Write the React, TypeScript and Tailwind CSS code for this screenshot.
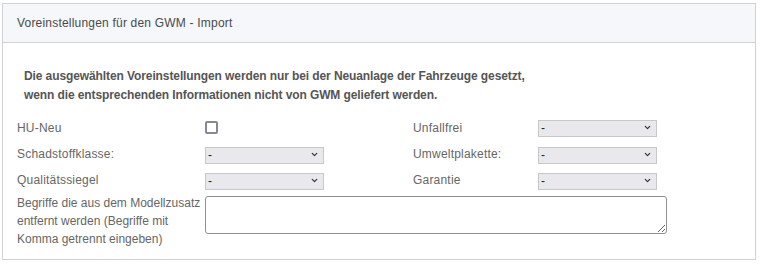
import { ChevronDown } from "lucide-react";

type Option = { label: string };

const options: Option[] = [{ label: "-" }];

function Select({ name }: { name: string }) {
  return (
    <div className="relative h-[17px] w-[119px]">
      <select
        name={name}
        defaultValue="-"
        className="h-full w-full appearance-none rounded-none border border-[#c8c8c8] bg-[#e9e9ed] pl-[2px] text-[12px] leading-[15px] text-[#222] outline-none"
      >
        {options.map((o) => (
          <option key={o.label}>{o.label}</option>
        ))}
      </select>
      <ChevronDown
        className="pointer-events-none absolute right-[5px] top-[4px] h-[9px] w-[9px] text-[#333]"
        strokeWidth={3.2}
        aria-hidden="true"
      />
    </div>
  );
}

export default function App() {
  return (
    <div className="h-[264px] w-[762px] bg-white pl-[2px] pt-[3px] font-['Liberation_Sans',Arial,sans-serif] text-[12px]">
      <div className="h-[257px] w-[754px] border border-[#d2d2d2] bg-white">
        <div className="flex h-[39px] items-center border-b border-[#d2d2d2] bg-[#f5f7fb] pl-[14px] pb-[1px] tracking-[0.2px] text-[#4a4a4a]">
          Voreinstellungen für den GWM - Import
        </div>

        <div className="pl-[14px] pt-[24px]">
          <p className="pl-[7px] text-[12px] font-bold leading-[19px] tracking-[-0.1px] text-[#555]">
            Die ausgewählten Voreinstellungen werden nur bei der Neuanlage der Fahrzeuge gesetzt,
            <br />
            wenn die entsprechenden Informationen nicht von GWM geliefert werden.
          </p>

          <div className="mt-[10px] grid grid-cols-[188px_208px_125px_119px] text-[#666]">
            <div className="flex h-[26px] items-center tracking-[0.2px]">HU-Neu</div>
            <div className="flex h-[26px] items-center pb-[2px]">
              <input
                type="checkbox"
                className="h-[13px] w-[13px] appearance-none rounded-[2px] border-2 border-[#8a8696] bg-white"
              />
            </div>
            <div className="flex h-[26px] items-center tracking-[0.2px]">Unfallfrei</div>
            <div className="flex h-[26px] items-center pb-[2px]">
              <Select name="unfallfrei" />
            </div>

            <div className="flex h-[26px] items-center tracking-[0.2px]">Schadstoffklasse:</div>
            <div className="flex h-[26px] items-center">
              <Select name="schadstoffklasse" />
            </div>
            <div className="flex h-[26px] items-center tracking-[0.2px]">Umweltplakette:</div>
            <div className="flex h-[26px] items-center">
              <Select name="umweltplakette" />
            </div>

            <div className="flex h-[26px] items-center tracking-[0.2px]">Qualitätssiegel</div>
            <div className="flex h-[26px] items-center">
              <Select name="qualitaetssiegel" />
            </div>
            <div className="flex h-[26px] items-center tracking-[0.2px]">Garantie</div>
            <div className="flex h-[26px] items-center">
              <Select name="garantie" />
            </div>

            <div className="mt-[1px] leading-[18px]">
              Begriffe die aus dem Modellzusatz entfernt werden (Begriffe mit Komma getrennt eingeben)
            </div>
            <div className="col-span-3 mt-[3px]">
              <textarea className="block h-[38px] w-[462px] rounded-[3px] border border-[#8f8f9d] bg-white" />
            </div>
          </div>
        </div>
      </div>
    </div>
  );
}
